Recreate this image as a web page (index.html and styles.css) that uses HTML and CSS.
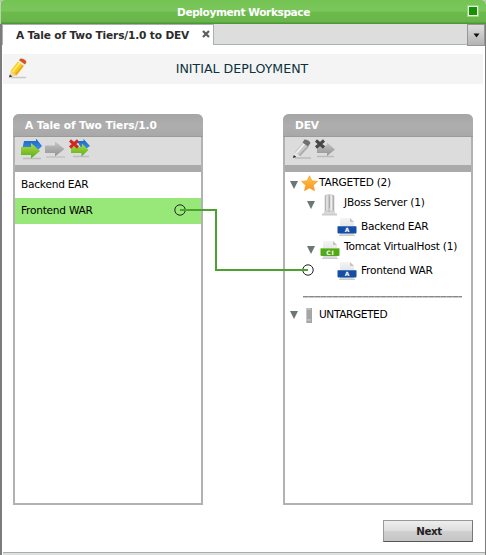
FILE: index.html
```html
<!DOCTYPE html>
<html lang="en">
<head>
<meta charset="utf-8">
<title>Deployment Workspace</title>
<link rel="stylesheet" href="styles.css">
</head>
<body>
<svg class="defs" width="0" height="0" aria-hidden="true">
  <defs>
    <linearGradient id="green" x2="0" y2="1"><stop stop-color="#b4dc45"/><stop offset="1" stop-color="#55ae18"/></linearGradient>
    <linearGradient id="blue" x2="0" y2="1"><stop stop-color="#1762c7"/><stop offset="1" stop-color="#3f9ae8"/></linearGradient>
    <linearGradient id="grey" x2="0" y2="1"><stop stop-color="#c4c4c4"/><stop offset="1" stop-color="#929292"/></linearGradient>
    <linearGradient id="gold" x2="0" y2="1"><stop stop-color="#ffc34a"/><stop offset="1" stop-color="#f8971d"/></linearGradient>
    <linearGradient id="steel"><stop stop-color="#999"/><stop offset=".2" stop-color="#eee"/><stop offset=".45" stop-color="#bbb"/><stop offset=".7" stop-color="#f4f4f4"/><stop offset="1" stop-color="#999"/></linearGradient>
    <linearGradient id="paper" x2="0" y2="1"><stop stop-color="#f4f4f4"/><stop offset="1" stop-color="#d8d8d8"/></linearGradient>
    <symbol id="file" viewBox="0 0 20 20">
      <path d="M3 1h10l4 4v13H3z" fill="url(#paper)"/>
      <path d="M13 1v4h4z" fill="#c3c3c3"/>
      <path d="M2 18.500h16" stroke="#ccc"/>
    </symbol>
  </defs>
</svg>
<div class="window">
  <header class="titlebar">
    <span class="title">Deployment Workspace</span>
    <span class="maximize"></span>
  </header>
  <div class="frame">
    <nav class="tabs">
      <div class="tab"><span>A Tale of Two Tiers/1.0 to DEV</span>
        <svg class="close" width="8" height="8" viewBox="0 0 8 8"><path d="M1 1l6 6M7 1L1 7" stroke="#5d5d5d" stroke-width="2.2"/></svg>
      </div>
      <div class="tab-menu"><svg width="7" height="5" viewBox="0 0 7 5"><path d="M.5.5h6l-3 4z" fill="#111"/></svg></div>
    </nav>
    <div class="banner">
      <svg class="banner-icon" width="20" height="21" viewBox="0 0 20 21">
        <path d="M3 19.500h15" stroke="#c8c8c8" stroke-width="1.500"/>
        <path d="M1 19.500l2-7 5.500 5z" fill="#ead8ac"/><path d="M1 19.500l.8-3 2.500 2z" fill="#333"/>
        <path d="M2.500 13L10 3.500l6 4.300-7.500 10z" fill="#fbc928"/>
        <path d="M4.500 14l7.500-9.500" stroke="#fff05f" stroke-width="1.800"/><path d="M7.700 16.500L15 7.500" stroke="#e8a31b" stroke-width="1.400"/>
        <path d="M10 3.500l1-1.300 6 4.200-1 1.400z" fill="#eee"/>
        <path d="M11 2.200L12.500.5q4.500 0 6 3.700L17 6.400z" fill="#d65319"/>
      </svg>
      <h1>INITIAL DEPLOYMENT</h1>
    </div>
    <main class="panels">
      <section class="panel">
        <h2>A Tale of Two Tiers/1.0</h2>
        <div class="toolbar">
          <svg width="22" height="21" viewBox="0 0 22 21">
            <path d="M2 19.500h18" stroke="#bdbdbd" stroke-width="1.500"/>
            <path d="M3 2h12V-.5l6 7.500-6 6V9H1.500z" fill="url(#blue)"/>
            <path d="M0 8h10V4l9 8-9 7.500V16H0z" fill="url(#green)"/>
          </svg>
          <svg width="21" height="21" viewBox="0 0 21 21">
            <path d="M1 18h19" stroke="#c3c3c3" stroke-width="1.500"/>
            <path d="M0 6.500h10V2.500l9.500 7.500-9.500 7.500V14H0z" fill="url(#grey)"/>
          </svg>
          <svg width="22" height="21" viewBox="0 0 22 21">
            <path d="M4 17.500h16" stroke="#bdbdbd" stroke-width="1.500"/>
            <path d="M8 2h6.500V0l6.500 7-7 5z" fill="url(#blue)"/>
            <path d="M2 8h11V4.500l6.500 6.500-7 6.500V14H2z" fill="url(#green)"/>
            <path d="M1 1.500l8 7M9 1.500l-8 7" stroke="#cb2a20" stroke-width="3"/>
          </svg>
        </div>
        <ul class="packages">
          <li>Backend EAR</li>
          <li class="selected">Frontend WAR</li>
        </ul>
      </section>
      <section class="panel">
        <h2>DEV</h2>
        <div class="toolbar muted">
          <svg width="21" height="21" viewBox="0 0 21 21">
            <path d="M3 19h16" stroke="#bbb" stroke-width="1.500"/>
            <path d="M1 19l2-6.500L8.500 17z" fill="#e5e5e5"/><path d="M1 19l.8-3 2.500 2z" fill="#222"/>
            <path d="M2.500 13L11 3.500l6 4-8.500 10z" fill="#c8c8c8"/>
            <path d="M4.500 14l8-9.500" stroke="#f2f2f2" stroke-width="1.800"/><path d="M7.500 16.500l8.500-9" stroke="#a5a5a5" stroke-width="1.200"/>
            <path d="M10.500 3.500L12.500.5q4.500 0 6 3.500l-2.500 3.500z" fill="#707070"/>
          </svg>
          <svg width="22" height="21" viewBox="0 0 22 21">
            <path d="M3 17.500h17" stroke="#bbb" stroke-width="1.500"/>
            <path d="M3 6.500h10V3.500l8 7-8 6.500v-3H3z" fill="url(#grey)"/>
            <path d="M2 1.500l8 7M10 1.500l-8 7" stroke="#464646" stroke-width="3"/>
          </svg>
        </div>
        <div class="tree">
          <div class="node root first">
            <svg class="arrow" width="8" height="8" viewBox="0 0 8 8"><path d="M0 0h8L4 8z"/></svg>
            <svg class="icon star" width="17" height="17" viewBox="0 0 17 17"><path d="M8.500 .8l2.400 5 5.600.6-4.200 3.800 1.200 5.500-5-2.800-5 2.800 1.200-5.500L.5 6.400l5.600-.6z" fill="url(#gold)" stroke="#f6a126" stroke-width=".7"/></svg>
            <span>TARGETED (2)</span>
          </div>
          <div class="node server">
            <svg class="arrow" width="8" height="8" viewBox="0 0 8 8"><path d="M0 0h8L4 8z"/></svg>
            <svg class="icon" width="20" height="22" viewBox="0 0 20 22">
              <path d="M2 20.500h15" stroke="#ccc" stroke-width="2"/><path d="M4 17h11v3H4z" fill="#d8d8d8"/>
              <path d="M5 1.500q4.500-2 9 0v15q-4.500 2-9 0z" fill="url(#steel)" stroke="#bbb" stroke-width=".6"/>
              <path d="M9.500 2v12" stroke="#aaa"/>
            </svg>
            <span>JBoss Server (1)</span>
          </div>
          <div class="node leaf">
            <svg class="icon" width="20" height="20" viewBox="0 0 20 20"><use href="#file"/><rect x=".5" y="9" width="19" height="7.500" rx="1" fill="#174da3"/><path d="M1 9.500h18" stroke="#3f79c5"/><text x="10" y="15.300" class="badge">A</text></svg>
            <span>Backend EAR</span>
          </div>
          <div class="node server host">
            <svg class="arrow" width="8" height="8" viewBox="0 0 8 8"><path d="M0 0h8L4 8z"/></svg>
            <svg class="icon" width="20" height="20" viewBox="0 0 20 20"><use href="#file"/><rect x=".5" y="8" width="19" height="8" rx="1" fill="#53a91b"/><path d="M1 8.500h18" stroke="#8bcb46"/><text x="10.500" y="14.500" class="badge wide">CI</text></svg>
            <span>Tomcat VirtualHost (1)</span>
          </div>
          <div class="node leaf">
            <svg class="icon" width="20" height="20" viewBox="0 0 20 20"><use href="#file"/><rect x=".5" y="9" width="19" height="7.500" rx="1" fill="#174da3"/><path d="M1 9.500h18" stroke="#3f79c5"/><text x="10" y="15.300" class="badge">A</text></svg>
            <span>Frontend WAR</span>
          </div>
          <div class="divider"></div>
          <div class="node root untargeted">
            <svg class="arrow" width="8" height="8" viewBox="0 0 8 8"><path d="M0 0h8L4 8z"/></svg>
            <svg class="icon star" width="17" height="17" viewBox="0 0 17 17"><path d="M5 1h6v15H5z" fill="#a5a5a5"/><path d="M6 2h4M6 13h4" stroke="#d4d4d4"/><path d="M5.500 1v15" stroke="#c6c6c6"/></svg>
            <span>UNTARGETED</span>
          </div>
        </div>
      </section>
    </main>
    <footer><button class="next">Next</button></footer>
  </div>
  <svg class="connector" width="142" height="74" viewBox="0 0 142 74">
    <circle cx="7" cy="7" r="5.200" fill="none" stroke="#222"/>
    <circle cx="135" cy="67" r="5.200" fill="#fff" stroke="#222"/>
    <path d="M7 7h36v60h92" fill="none" stroke="#4ba32d" stroke-width="2"/>
  </svg>
</div>
</body>
</html>
```
FILE: styles.css
```css
* { box-sizing: border-box; }
body { margin: 0; background: #bdbdbd; font: 10.600px/14px "DejaVu Sans", Verdana, sans-serif; letter-spacing: -0.240px; color: #000; }
.defs { position: absolute; }
.window { position: relative; display: flex; flex-direction: column; width: 486px; height: 555px; overflow: hidden; background: #fff; border-radius: 5px 5px 0 0; }
.titlebar { display: flex; align-items: center; justify-content: center; height: 24px; flex: none; padding-left: 2px; background: linear-gradient(#73c453, #7cc65d 11px, #6cbb4c 12px, #68b44b 22px, #4f963b 23px); border-left: 1px solid #b6d5aa; }
.title { flex: 1; margin-top: -1px; padding-left: 19px; text-align: center; color: #fff; font-weight: bold; font-size: 10.600px; letter-spacing: -0.420px; }
.maximize { width: 12px; height: 12px; margin: -3px 7px 0 2px; background: #179100; border: 2px solid #eaf6e3; outline: 1px solid #98d581; outline-offset: -1px; }
.frame { display: flex; flex-direction: column; flex: 1; border: solid #7c7c7c; border-width: 0 1px 0 2px; }
.frame::after { content: ""; height: 3px; margin: auto 0 0 1px; flex: none; background: linear-gradient(#a6adab 1px, #dce0df 1px); }
.tabs { display: flex; height: 21px; background: #ddd; border-bottom: 1px solid #a9b4b2; }
.tab { display: flex; align-items: center; width: 212px; height: 21px; padding: 0 3px 0 13px; background: #fff; border: 1px solid #a8b1b1; border-width: 1px 1px 0; color: #2c2c2c; font-size: 10.600px; letter-spacing: -0.160px; font-weight: bold; white-space: nowrap; }
.close { margin: -2px 0 0 auto; }
.tab-menu { display: flex; align-items: center; justify-content: center; width: 18px; height: 22px; margin-left: auto; background: linear-gradient(#dedede, #b3b3b3); border: 1px solid #969696; }
.banner { display: flex; align-items: center; height: 30px; margin: 9px 2px 0 1px; padding-left: 5px; background: #f4f4f4; }
.banner-icon { margin-top: -2px; }
h1 { flex: 1; margin: 0 27px 0 0; text-align: center; color: #0b333c; font-size: 12.600px; font-weight: normal; line-height: 16px; letter-spacing: 0; }
.panels { display: flex; justify-content: space-between; margin: 30px 12px 0 11px; }
.panel { width: 190px; height: 391px; background: #fff; border: 2px solid #b2b2b2; border-top: 0; border-radius: 6px 6px 0 0; }
.panel h2 { height: 23px; margin: 0 -2px; padding: 4px 12px; background: linear-gradient(#a5a5a5, #aeaeae 12px, #a8a8a8 22px, #8d8d8d); border-radius: 6px 6px 0 0; color: #fff; font-size: 10.600px; line-height: 14px; letter-spacing: -0.100px; }
.toolbar { display: flex; gap: 2px; height: 35px; padding: 2px 0 0 6px; background: #dcdcdc; border-bottom: 7px solid #aaa; }
.toolbar svg:last-child { margin-left: 1px; }
.toolbar.muted { padding-left: 7px; }
.toolbar.muted svg:last-child { margin-left: -1px; }
.packages { margin: 0; padding: 0; list-style: none; }
.packages li { height: 26px; padding: 5px 6px; line-height: 14px; }
.packages .selected { background: #98e879; }
.tree { padding-top: 2px; }
.node { display: flex; align-items: center; height: 22px; white-space: nowrap; }
.arrow { flex: none; fill: #6c7774; }
.root { padding-left: 5px; }
.first { height: 18px; }
.first .arrow { margin-top: 3px; }
.first span { margin-top: -2px; }
.star { margin: 0 1px 0 3px; }
.server { padding-left: 22px; }
.server .icon { margin: 3px 4px 0 5px; }
.server .arrow { margin-top: 4px; }
.server span { margin-top: -3px; }
.host { height: 20px; }
.host .arrow { margin-top: 4px; }
.host span { margin-top: -4px; }
.leaf { padding-left: 52px; height: 24px; }
.leaf .icon { margin: 2px 4px 0 0; }
.divider { width: 159px; height: 2px; margin: 14px 0 6px 18px; background: repeating-linear-gradient(90deg, #888 0 5px, #aaa 5px 6px); border-bottom: 1px solid #ccc; }
.untargeted span { margin-top: -2px; letter-spacing: -0.400px; }
.badge { fill: #fff; font: bold 6px "DejaVu Sans", sans-serif; text-anchor: middle; }
.wide { letter-spacing: 1px; }
footer { display: flex; justify-content: flex-end; margin: 15px 12px 0 0; }
.next { width: 90px; height: 22px; padding: 0 0 1px 2px; background: linear-gradient(#eee, #ddd 50%, #d0d0d0 51%, #c5c5c5); border: 1px solid #999; border-bottom-color: #555; border-right-color: #777; color: #222; font: bold 10.300px/14px "DejaVu Sans", Verdana, sans-serif; letter-spacing: -0.400px; }
.connector { position: absolute; left: 173px; top: 203px; }
```
